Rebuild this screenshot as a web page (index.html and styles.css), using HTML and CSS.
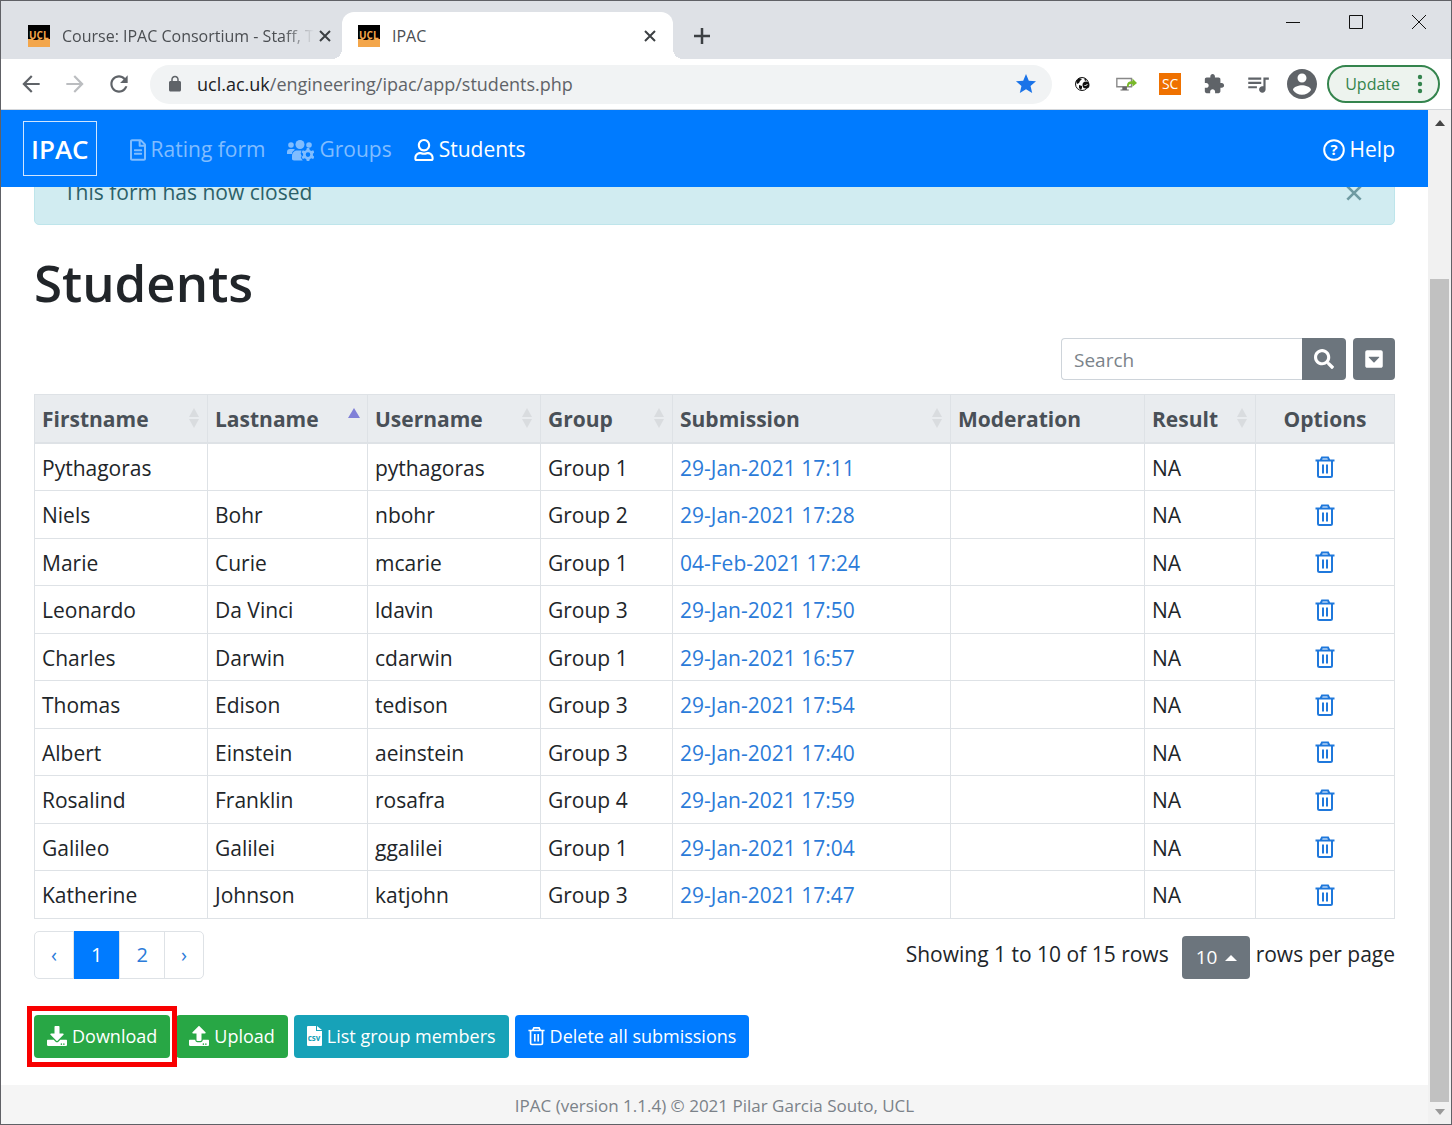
FILE: index.html
```html
<!DOCTYPE html>
<html lang="en">
    <head>
        <meta charset="utf-8">
        <meta name="viewport" content="width=device-width, initial-scale=1.0">
        <title>IPAC</title>
        <link rel="stylesheet" href="styles.css">
    </head>
    <body>
        <svg class="sprite">
            <symbol id="trash" viewBox="0 0 20 22">
                <path fill="none" stroke="currentColor" stroke-width="2" d="M0.500 4.500H19.500M3 5v14.500a1.500 1.500 0 0 0 1.500 1.500h11a1.500 1.500 0 0 0 1.500-1.500V5M5.500 4.500L7 1.500h6l1.500 3"/>
                <path fill="none" stroke="currentColor" stroke-width="2" d="M8 8.500v9M12 8.500v9"/>
            </symbol>
            <symbol id="close" viewBox="0 0 12 12">
                <path fill="none" stroke="currentColor" stroke-width="2" d="M1 1l10 10M11 1L1 11"/>
            </symbol>
            <symbol id="sort" viewBox="0 0 12 20">
                <path fill="currentColor" d="M6 0l5 9H1zM6 20l5-9H1z"/>
            </symbol>
            <symbol id="ucl" viewBox="0 0 22 22">
                <path fill="#000" d="M0 0h22v15H0z"/>
                <path fill="#f3a64b" d="M0 14h3l1-1 2 2h3l2-1 3 1 3-1h5v8H0z"/>
                <text x="1" y="14" font-size="10" font-weight="700" fill="#f3a64b">UCL</text>
            </symbol>
        </svg>

        <div class="window">
            <div class="tabs">
                <div class="tab">
                    <svg class="favicon"><use href="#ucl"/></svg>
                    <span class="tab-title fade">Course: IPAC Consortium - Staff, T</span>
                    <button class="tab-close" aria-label="Close tab"><svg><use href="#close"/></svg></button>
                </div>
                <div class="tab active">
                    <svg class="favicon"><use href="#ucl"/></svg>
                    <span class="tab-title">IPAC</span>
                    <button class="tab-close" aria-label="Close tab"><svg><use href="#close"/></svg></button>
                </div>
                <button class="new-tab" aria-label="New tab">
                    <svg viewBox="0 0 18 18"><path stroke="#3c4043" stroke-width="2.500" d="M9 1v16M1 9h16"/></svg>
                </button>
                <div class="controls">
                    <button aria-label="Minimize"><svg viewBox="0 0 16 16"><path stroke="#111" d="M1 8.500h14"/></svg></button>
                    <button aria-label="Maximize"><svg viewBox="0 0 16 16"><path fill="none" stroke="#111" d="M1.500 1.500h13v13h-13z"/></svg></button>
                    <button aria-label="Close"><svg viewBox="0 0 16 16"><path stroke="#111" d="M1 1l14 14M15 1L1 15"/></svg></button>
                </div>
            </div>

            <div class="toolbar">
                <button class="tool" aria-label="Back"><svg viewBox="0 0 24 24"><path d="M20 11H7.830l5.590-5.590L12 4l-8 8 8 8 1.410-1.410L7.830 13H20v-2z"/></svg></button>
                <button class="tool off" aria-label="Forward"><svg viewBox="0 0 24 24"><path d="M12 4l-1.410 1.410L16.170 11H4v2h12.170l-5.580 5.590L12 20l8-8z"/></svg></button>
                <button class="tool" aria-label="Reload"><svg viewBox="0 0 24 24"><path d="M17.650 6.350C16.200 4.900 14.210 4 12 4c-4.420 0-7.990 3.580-7.990 8s3.570 8 7.990 8c3.730 0 6.840-2.550 7.730-6h-2.080c-.82 2.330-3.040 4-5.650 4-3.310 0-6-2.690-6-6s2.690-6 6-6c1.660 0 3.140.69 4.220 1.780L13 11h7V4l-2.350 2.350z"/></svg></button>
                <div class="address">
                    <svg class="lock" viewBox="0 0 24 24"><path d="M18 8h-1V6c0-2.760-2.240-5-5-5S7 3.240 7 6v2H6c-1.100 0-2 .9-2 2v10c0 1.100.9 2 2 2h12c1.100 0 2-.9 2-2V10c0-1.100-.9-2-2-2zM9 8V6c0-1.660 1.340-3 3-3s3 1.340 3 3v2H9z"/></svg>
                    <label for="url">ucl.ac.uk</label>
                    <input type="text" id="url" value="/engineering/ipac/app/students.php">
                    <svg class="star" viewBox="0 0 24 24"><path d="M12 17.270L18.180 21l-1.640-7.030L22 9.240l-7.190-.61L12 2 9.190 8.630 2 9.240l5.460 4.730L5.820 21z"/></svg>
                </div>
                <button class="tool" aria-label="Web extension">
                    <svg class="small" viewBox="0 0 16 16"><circle cx="8" cy="8" r="6.500" fill="#fff" stroke="#111" stroke-width="1"/><path fill="#111" d="M2 5l3-3 3 1-2 2-1 2-2 1zM5 9l3 1v2l-1 2-2-2zM10 2l3 2-2 1z"/><circle cx="12" cy="9" r="3.500" fill="#111"/><path fill="none" stroke="#fff" d="M10.500 9l1 1 2-2"/></svg>
                </button>
                <button class="tool" aria-label="Screen sharing">
                    <svg class="mid" viewBox="0 0 24 24"><path fill="#fff" stroke="#888" stroke-width="1.500" d="M2 6h16v9H2z"/><path fill="#666" d="M8 15h5v3h2v1H6v-1h2z"/><path fill="#79b829" d="M13 15c0-5 2-6 6-6V6l5 5-5 4v-3c-3 0-4 0-4 3h-2z"/></svg>
                </button>
                <button class="tool" aria-label="SC extension"><span class="sc">SC</span></button>
                <button class="tool" aria-label="Extensions"><svg class="mid" viewBox="0 0 24 24"><path d="M20.500 11H19V7c0-1.100-.9-2-2-2h-4V3.500C13 2.120 11.880 1 10.500 1S8 2.120 8 3.500V5H4c-1.100 0-1.990.9-1.990 2v3.800H3.500c1.490 0 2.700 1.210 2.700 2.700s-1.210 2.700-2.700 2.700H2V20c0 1.100.9 2 2 2h3.800v-1.500c0-1.490 1.210-2.700 2.700-2.700 1.490 0 2.700 1.210 2.700 2.700V22H17c1.100 0 2-.9 2-2v-4h1.500c1.380 0 2.500-1.120 2.500-2.500S21.880 11 20.500 11z"/></svg></button>
                <button class="tool" aria-label="Media"><svg viewBox="0 0 24 24"><path d="M15 6H3v2h12V6zm0 4H3v2h12v-2zM3 16h8v-2H3v2zM17 6v8.180c-.31-.11-.65-.18-1-.18-1.660 0-3 1.340-3 3s1.340 3 3 3 3-1.340 3-3V8h3V6h-5z"/></svg></button>
                <button class="tool" aria-label="Profile"><svg class="avatar" viewBox="2 2 20 20"><path d="M12 2C6.480 2 2 6.480 2 12s4.480 10 10 10 10-4.480 10-10S17.520 2 12 2zm0 3c1.660 0 3 1.340 3 3s-1.340 3-3 3-3-1.340-3-3 1.340-3 3-3zm0 14.200c-2.500 0-4.710-1.280-6-3.220.03-1.990 4-3.080 6-3.080 1.990 0 5.970 1.090 6 3.080-1.290 1.940-3.500 3.220-6 3.220z"/></svg></button>
                <button class="update">Update
                    <svg viewBox="0 0 6 20"><circle cx="3" cy="3" r="2.200"/><circle cx="3" cy="10" r="2.200"/><circle cx="3" cy="17" r="2.200"/></svg>
                </button>
            </div>

            <div class="viewport">
                <div class="page">
                    <nav class="navbar">
                        <a class="brand" href="#">IPAC</a>
                        <a href="#"><svg class="i-file" viewBox="0 0 384 512"><path d="M288 248v28c0 6.600-5.400 12-12 12H108c-6.600 0-12-5.400-12-12v-28c0-6.600 5.400-12 12-12h168c6.600 0 12 5.400 12 12zm-12 72H108c-6.600 0-12 5.400-12 12v28c0 6.600 5.400 12 12 12h168c6.600 0 12-5.400 12-12v-28c0-6.600-5.400-12-12-12zm108-188.100V464c0 26.500-21.500 48-48 48H48c-26.500 0-48-21.500-48-48V48C0 21.500 21.500 0 48 0h204.100C264.800 0 277 5.100 286 14.100L369.900 98c9 8.900 14.100 21.200 14.100 33.900zm-128-80V128h76.100L256 51.900zM336 464V176H232c-13.300 0-24-10.700-24-24V48H48v416h288z"/></svg>Rating form</a>
                        <a href="#"><svg class="i-users" viewBox="0 0 27 22">
                            <circle cx="4" cy="6" r="2.800"/><circle cx="22" cy="6" r="2.800"/><circle cx="13" cy="5.500" r="4.500"/>
                            <path d="M0 15v-2c0-2 1-3 3-3h3c1 0 1.500.3 2 .8C6 12 5 13 5 15zM5 20v-3c0-3 2-5.500 5-5.500h4.500l-.8 3 1 2.500-1 1.500 2 3H7c-1.200 0-2-.8-2-1.500z"/>
                            <path fill-rule="evenodd" d="M19.800 9h2.400l.5 2 1.500.9 2-.6 1.200 2-1.500 1.500v1.600l1.500 1.500-1.200 2-2-.6-1.500.9-.5 2h-2.400l-.5-2-1.500-.9-2 .6-1.200-2 1.500-1.500v-1.600l-1.500-1.500 1.200-2 2 .6 1.500-.9zM21 13.300a2.300 2.300 0 1 0 0 4.600 2.300 2.300 0 0 0 0-4.600z"/>
                        </svg>Groups</a>
                        <a class="current" href="#"><svg class="i-user" viewBox="0 0 448 512"><path d="M313.600 304c-28.700 0-42.500 16-89.600 16-47.100 0-60.800-16-89.600-16C60.200 304 0 364.200 0 438.400V464c0 26.500 21.500 48 48 48h352c26.500 0 48-21.500 48-48v-25.600c0-74.200-60.200-134.400-134.400-134.400zM400 464H48v-25.600c0-47.600 38.800-86.400 86.400-86.400 14.600 0 38.300 16 89.600 16 51.700 0 74.900-16 89.600-16 47.600 0 86.400 38.800 86.400 86.400V464zM224 288c79.500 0 144-64.500 144-144S303.500 0 224 0 80 64.500 80 144s64.500 144 144 144zm0-240c52.900 0 96 43.100 96 96s-43.100 96-96 96-96-43.100-96-96 43.100-96 96-96z"/></svg>Students</a>
                        <a class="current help" href="#"><svg class="i-help" viewBox="0 0 22 22"><circle cx="11" cy="11" r="9.800" fill="none" stroke="#fff" stroke-width="2"/><text x="11" y="16" text-anchor="middle" font-size="15" font-weight="700">?</text></svg>Help</a>
                    </nav>

                    <main>
                        <div class="alert">
                            <span>This form has now closed</span>
                            <button aria-label="Dismiss"><svg><use href="#close"/></svg></button>
                        </div>

                        <h1>Students</h1>

                        <div class="search">
                            <input type="text" id="search" aria-label="Search" placeholder="Search">
                            <button class="go" aria-label="Search"><svg viewBox="0 0 512 512"><path d="M505 442.700L405.300 343c-4.500-4.500-10.600-7-17-7H372c27.600-35.300 44-79.700 44-128C416 93.100 322.900 0 208 0S0 93.100 0 208s93.100 208 208 208c48.300 0 92.700-16.400 128-44v16.300c0 6.400 2.500 12.500 7 17l99.700 99.700c9.400 9.400 24.600 9.400 33.900 0l28.300-28.300c9.400-9.400 9.400-24.600.1-34zM208 336c-70.700 0-128-57.200-128-128 0-70.700 57.200-128 128-128 70.700 0 128 57.200 128 128 0 70.700-57.200 128-128 128z"/></svg></button>
                            <button class="more" aria-label="Toggle view"><svg viewBox="0 0 448 512"><path d="M448 80v352c0 26.510-21.490 48-48 48H48c-26.510 0-48-21.490-48-48V80c0-26.510 21.490-48 48-48h352c26.510 0 48 21.490 48 48zM92.485 220.485l123.030 123.030c4.686 4.686 12.284 4.686 16.971 0l123.029-123.030c7.560-7.560 2.206-20.485-8.485-20.485H100.971c-10.691 0-16.046 12.926-8.486 20.485z"/></svg></button>
                        </div>

                        <table>
                            <colgroup>
                                <col class="c-first"><col class="c-last"><col class="c-user"><col class="c-group">
                                <col class="c-sub"><col class="c-mod"><col class="c-res"><col class="c-opt">
                            </colgroup>
                            <thead>
                                <tr>
                                    <th><div>Firstname<svg><use href="#sort"/></svg></div></th>
                                    <th><div>Lastname<svg class="asc" viewBox="0 0 12 20"><path d="M6 0l6 10H0z"/></svg></div></th>
                                    <th><div>Username<svg><use href="#sort"/></svg></div></th>
                                    <th><div>Group<svg><use href="#sort"/></svg></div></th>
                                    <th><div>Submission<svg><use href="#sort"/></svg></div></th>
                                    <th>Moderation</th>
                                    <th><div>Result<svg><use href="#sort"/></svg></div></th>
                                    <th class="opt">Options</th>
                                </tr>
                            </thead>
                            <tbody>
                                <tr><td>Pythagoras</td><td></td><td>pythagoras</td><td>Group 1</td><td><a href="#">29-Jan-2021 17:11</a></td><td></td><td>NA</td><td class="opt"><button aria-label="Delete"><svg><use href="#trash"/></svg></button></td></tr>
                                <tr><td>Niels</td><td>Bohr</td><td>nbohr</td><td>Group 2</td><td><a href="#">29-Jan-2021 17:28</a></td><td></td><td>NA</td><td class="opt"><button aria-label="Delete"><svg><use href="#trash"/></svg></button></td></tr>
                                <tr><td>Marie</td><td>Curie</td><td>mcarie</td><td>Group 1</td><td><a href="#">04-Feb-2021 17:24</a></td><td></td><td>NA</td><td class="opt"><button aria-label="Delete"><svg><use href="#trash"/></svg></button></td></tr>
                                <tr><td>Leonardo</td><td>Da Vinci</td><td>ldavin</td><td>Group 3</td><td><a href="#">29-Jan-2021 17:50</a></td><td></td><td>NA</td><td class="opt"><button aria-label="Delete"><svg><use href="#trash"/></svg></button></td></tr>
                                <tr><td>Charles</td><td>Darwin</td><td>cdarwin</td><td>Group 1</td><td><a href="#">29-Jan-2021 16:57</a></td><td></td><td>NA</td><td class="opt"><button aria-label="Delete"><svg><use href="#trash"/></svg></button></td></tr>
                                <tr><td>Thomas</td><td>Edison</td><td>tedison</td><td>Group 3</td><td><a href="#">29-Jan-2021 17:54</a></td><td></td><td>NA</td><td class="opt"><button aria-label="Delete"><svg><use href="#trash"/></svg></button></td></tr>
                                <tr><td>Albert</td><td>Einstein</td><td>aeinstein</td><td>Group 3</td><td><a href="#">29-Jan-2021 17:40</a></td><td></td><td>NA</td><td class="opt"><button aria-label="Delete"><svg><use href="#trash"/></svg></button></td></tr>
                                <tr><td>Rosalind</td><td>Franklin</td><td>rosafra</td><td>Group 4</td><td><a href="#">29-Jan-2021 17:59</a></td><td></td><td>NA</td><td class="opt"><button aria-label="Delete"><svg><use href="#trash"/></svg></button></td></tr>
                                <tr><td>Galileo</td><td>Galilei</td><td>ggalilei</td><td>Group 1</td><td><a href="#">29-Jan-2021 17:04</a></td><td></td><td>NA</td><td class="opt"><button aria-label="Delete"><svg><use href="#trash"/></svg></button></td></tr>
                                <tr><td>Katherine</td><td>Johnson</td><td>katjohn</td><td>Group 3</td><td><a href="#">29-Jan-2021 17:47</a></td><td></td><td>NA</td><td class="opt"><button aria-label="Delete"><svg><use href="#trash"/></svg></button></td></tr>
                            </tbody>
                        </table>

                        <div class="paging">
                            <div class="pages">
                                <a href="#">‹</a>
                                <a class="on" href="#">1</a>
                                <a href="#">2</a>
                                <a href="#">›</a>
                            </div>
                            <div class="detail">
                                <span class="showing">Showing 1 to 10 of 15 rows</span>
                                <div class="size">
                                    <select id="size">
                                        <option>10</option>
                                        <option>25</option>
                                        <option>50</option>
                                    </select>
                                    <svg viewBox="0 0 12 6"><path d="M6 0l6 6H0z"/></svg>
                                </div>
                                <label for="size">rows per page</label>
                            </div>
                        </div>

                        <div class="actions">
                            <button class="green marked"><svg viewBox="0 0 512 512"><path d="M216 0h80c13.300 0 24 10.700 24 24v168h87.700c17.800 0 26.700 21.500 14.100 34.100L269.700 378.300c-7.500 7.500-19.800 7.500-27.300 0L90.100 226.100c-12.600-12.600-3.700-34.100 14.100-34.100H192V24c0-13.300 10.700-24 24-24zm296 376v112c0 13.300-10.700 24-24 24H24c-13.300 0-24-10.700-24-24V376c0-13.300 10.700-24 24-24h146.700l49 49c20.100 20.100 52.500 20.100 72.600 0l49-49H488c13.300 0 24 10.700 24 24zm-124 88c0-11-9-20-20-20s-20 9-20 20 9 20 20 20 20-9 20-20zm64 0c0-11-9-20-20-20s-20 9-20 20 9 20 20 20 20-9 20-20z"/></svg>Download</button>
                            <button class="green"><svg viewBox="0 0 512 512"><path d="M296 384h-80c-13.300 0-24-10.700-24-24V192h-87.700c-17.800 0-26.700-21.500-14.100-34.100L242.300 5.700c7.500-7.500 19.800-7.500 27.300 0l152.200 152.200c12.600 12.600 3.700 34.100-14.100 34.100H320v168c0 13.300-10.700 24-24 24zm216-8v112c0 13.300-10.700 24-24 24H24c-13.300 0-24-10.700-24-24V376c0-13.300 10.700-24 24-24h136v8c0 30.900 25.100 56 56 56h80c30.900 0 56-25.100 56-56v-8h136c13.300 0 24 10.700 24 24zm-124 88c0-11-9-20-20-20s-20 9-20 20 9 20 20 20 20-9 20-20zm64 0c0-11-9-20-20-20s-20 9-20 20 9 20 20 20 20-9 20-20z"/></svg>Upload</button>
                            <button class="teal"><svg class="csv" viewBox="0 0 15 20"><path d="M0 1a1 1 0 0 1 1-1h8v5h6v14a1 1 0 0 1-1 1H1a1 1 0 0 1-1-1zM10 0l5 4h-5z"/><text x="7" y="15" text-anchor="middle" font-size="8" font-weight="700">csv</text></svg>List group members</button>
                            <button class="blue"><svg class="bin"><use href="#trash"/></svg>Delete all submissions</button>
                        </div>
                    </main>

                    <footer>IPAC (version 1.1.4) © 2021 Pilar Garcia Souto, UCL</footer>
                </div>

                <div class="scrollbar">
                    <svg viewBox="0 0 10 6"><path fill="#444" d="M5 0l5 6H0z"/></svg>
                    <div class="track"><div class="thumb"></div></div>
                    <svg viewBox="0 0 10 6"><path fill="#999" d="M5 6l5-6H0z"/></svg>
                </div>
            </div>
        </div>
    </body>
</html>
```
FILE: styles.css
```css
* {
    box-sizing: border-box;
}
body {
    margin: 0;
    font-family: "Open Sans", "Noto Sans", sans-serif;
    font-size: 21px;
    line-height: 1.5;
    color: #212529;
    background: #fff;
}
button, input, select {
    font: inherit;
    color: inherit;
    border: none;
    background: none;
    padding: 0;
    margin: 0;
}
button {
    cursor: pointer;
}
a {
    color: #2b7bd9;
    text-decoration: none;
}
svg {
    display: block;
    flex: none;
    fill: currentColor;
}
.sprite {
    display: none;
}
.window {
    display: flex;
    flex-direction: column;
    height: 100vh;
    border: 1px solid #606166;
    overflow: hidden;
}

/* tab strip */
.tabs {
    display: flex;
    height: 58px;
    flex: none;
    padding-top: 11px;
    background: #dee1e6;
}
.tab {
    display: flex;
    align-items: center;
    width: 331px;
    padding: 0 17px 0 16px;
    font-size: 16px;
    color: #4b4e52;
    position: relative;
}
.tab:first-child {
    width: 341px;
    padding-left: 27px;
    padding-right: 15px;
}
.tab.active {
    background: #fff;
    border-radius: 12px 12px 0 0;
}
.tab.active::before, .tab.active::after {
    content: "";
    position: absolute;
    bottom: 0;
    width: 10px;
    height: 10px;
}
.tab.active::before {
    right: 100%;
    background: radial-gradient(circle at 0 0, #dee1e6 10px, #fff 10px);
}
.tab.active::after {
    left: 100%;
    background: radial-gradient(circle at 100% 0, #dee1e6 10px, #fff 10px);
}
.favicon {
    width: 22px;
    height: 22px;
}
.tab-title {
    flex: 1;
    margin: 0 12px;
    white-space: nowrap;
}
.fade {
    margin-right: 5px;
    -webkit-mask-image: linear-gradient(to right, #000 88%, transparent);
    mask-image: linear-gradient(to right, #000 88%, transparent);
}
.tab-close {
    color: #3c4043;
}
.tab-close svg {
    width: 12px;
    height: 12px;
}
.new-tab {
    margin-left: 20px;
}
.new-tab svg {
    width: 18px;
    height: 18px;
}
.controls {
    display: flex;
    gap: 47px;
    align-items: flex-start;
    margin-left: auto;
    padding: 2px 24px 0 0;
}
.controls svg {
    width: 16px;
    height: 16px;
}

/* toolbar */
.toolbar {
    display: flex;
    align-items: center;
    height: 51px;
    flex: none;
    padding: 0 11px 0 8px;
    color: #5f6368;
    border-bottom: 1px solid #d5d7da;
}
.tool {
    display: flex;
    align-items: center;
    justify-content: center;
    width: 44px;
    height: 40px;
}
.tool svg {
    width: 26px;
    height: 26px;
}
.tool .small {
    width: 16px;
    height: 16px;
}
.tool .mid {
    width: 22px;
    height: 22px;
}
.tool .avatar {
    width: 30px;
    height: 30px;
}
.off {
    color: #bbbdc0;
}
.sc {
    width: 22px;
    height: 22px;
    line-height: 22px;
    font-size: 14px;
    color: #fff;
    background: #ef7100;
}
.address {
    display: flex;
    align-items: center;
    flex: 1;
    height: 39px;
    margin: 0 8px 0 9px;
    padding: 0 14px 0 16px;
    border-radius: 20px;
    background: #f1f3f4;
    font-size: 18px;
}
.address label {
    color: #202124;
}
.address input {
    flex: 1;
}
.lock {
    width: 18px;
    height: 18px;
    margin-right: 13px;
}
.star {
    width: 24px;
    height: 24px;
    color: #1a73e8;
}
.update {
    display: flex;
    align-items: center;
    gap: 17px;
    height: 38px;
    margin-left: 3px;
    padding: 0 15px 0 16px;
    border: 2px solid #34844d;
    border-radius: 19px;
    background: #edf3ee;
    color: #34844d;
    font-size: 16px;
}
.update svg {
    width: 6px;
    height: 20px;
}

/* page */
.viewport {
    display: flex;
    flex: 1;
    min-height: 0;
}
.page {
    flex: 1;
    display: flex;
    flex-direction: column;
    overflow: hidden;
}
.navbar {
    display: flex;
    align-items: center;
    gap: 22px;
    height: 77px;
    flex: none;
    padding: 0 33px 0 22px;
    background: #007bff;
    position: relative;
    z-index: 1;
}
.navbar a {
    display: flex;
    align-items: center;
    gap: 5px;
    padding-top: 3px;
    color: #80bdff;
}
.navbar .current {
    color: #fff;
}
.navbar .brand {
    margin-right: 11px;
    padding: 8px 7px 6px;
    border: 1px solid #cfe5ff;
    color: #fff;
    font-size: 26px;
    font-weight: 600;
}
.navbar .help {
    margin-left: auto;
}
.i-file {
    width: 16px;
    height: 22px;
}
.i-users {
    width: 27px;
    height: 22px;
}
.i-user {
    width: 20px;
    height: 22px;
}
.i-help {
    width: 22px;
    height: 22px;
}
main {
    flex: 1;
    margin-top: -28px;
    padding: 0 33px;
}
.alert {
    display: flex;
    align-items: center;
    justify-content: space-between;
    height: 66px;
    padding: 2px 32px 0 29px;
    border: 1px solid #bee5eb;
    border-radius: 5px;
    background: #d1ecf1;
    color: #2c6169;
}
.alert svg {
    width: 16px;
    height: 16px;
    color: #6f9ba2;
}
h1 {
    margin: 24px 0 23px;
    font-size: 51px;
    font-weight: 600;
    line-height: 66px;
}
.search {
    display: flex;
    justify-content: flex-end;
    height: 42px;
    margin-bottom: 14px;
}
.search input {
    width: 241px;
    padding: 2px 12px 0;
    border: 1px solid #ced4da;
    border-right: none;
    border-radius: 4px 0 0 4px;
    font-size: 19px;
}
.search input::placeholder {
    color: #7b838a;
}
.search button {
    display: flex;
    align-items: center;
    justify-content: center;
    background: #6c757d;
    color: #fff;
}
.search .go {
    width: 44px;
    border-radius: 0 4px 4px 0;
}
.search .more {
    width: 42px;
    margin-left: 7px;
    border-radius: 4px;
}
.search svg {
    width: 20px;
    height: 20px;
}

table {
    width: 100%;
    table-layout: fixed;
    border-collapse: collapse;
}
.c-first, .c-user { width: 173px; }
.c-last { width: 160px; }
.c-group { width: 132px; }
.c-sub { width: 278px; }
.c-mod { width: 194px; }
.c-res { width: 111px; }
.c-opt { width: 139px; }
th, td {
    padding: 9px 7px 6px;
    border: 1px solid #dee2e6;
    text-align: left;
    white-space: nowrap;
}
th {
    background: #e9ecef;
    color: #495057;
    border-bottom-width: 2px;
}
th div {
    display: flex;
    align-items: center;
    justify-content: space-between;
}
th svg {
    width: 12px;
    height: 20px;
    margin-bottom: 4px;
    color: #d9dcdf;
}
th .asc {
    color: #8080d8;
}
.opt {
    text-align: center;
}
td.opt {
    padding: 8px 7px 7px;
}
.opt button {
    display: block;
    margin: 0 auto;
    color: #1f78dc;
}
.opt svg {
    width: 20px;
    height: 22px;
}

.paging {
    display: flex;
    justify-content: space-between;
    margin-top: 12px;
}
.pages {
    display: flex;
    height: 48px;
    border: 1px solid #dee2e6;
    border-radius: 5px;
}
.pages a {
    padding: 8px 16px;
    font-size: 20px;
}
.pages a + a {
    border-left: 1px solid #dee2e6;
}
.pages .on {
    margin: -1px 0;
    padding: 9px 17px;
    background: #007bff;
    color: #fff;
}
.detail {
    display: flex;
    align-items: center;
}
.size {
    position: relative;
    margin: 5px 6px 0 13px;
    color: #fff;
}
.size select {
    display: block;
    appearance: none;
    width: 68px;
    height: 43px;
    padding-left: 14px;
    border-radius: 4px;
    background: #6c757d;
    font-size: 19px;
}
.size svg {
    position: absolute;
    right: 13px;
    top: 19px;
    width: 12px;
    height: 6px;
}

.actions {
    display: flex;
    gap: 6px;
    margin: 36px 0 27px;
}
.actions button {
    display: flex;
    align-items: center;
    gap: 5px;
    height: 43px;
    padding: 0 13px;
    border-radius: 4px;
    color: #fff;
    font-size: 18px;
    position: relative;
}
.actions svg {
    width: 20px;
    height: 20px;
}
.actions .csv {
    width: 15px;
}
.actions .bin {
    width: 17px;
}
.csv text {
    fill: #17a2b8;
}
.green { background: #28a745; }
.teal { background: #17a2b8; }
.blue { background: #007bff; }
/* highlight round the download button */
.marked::after {
    content: "";
    position: absolute;
    inset: -9px -7px;
    border: 5px solid #f80000;
    z-index: 1;
}
footer {
    flex: none;
    height: 39px;
    padding-top: 8px;
    background: #f5f5f5;
    color: #7b8289;
    text-align: center;
    font-size: 17px;
}

.scrollbar {
    display: flex;
    flex-direction: column;
    align-items: center;
    width: 23px;
    padding: 10px 0 9px;
    background: #f1f1f1;
}
.scrollbar svg {
    width: 10px;
    height: 6px;
}
.track {
    flex: 1;
    display: flex;
    flex-direction: column;
    justify-content: flex-end;
    width: 19px;
    margin: 8px 0 7px;
}
.thumb {
    height: 85%;
    background: #c1c1c1;
}
```
